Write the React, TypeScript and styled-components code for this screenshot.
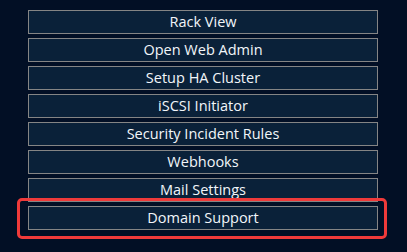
import styled, { createGlobalStyle } from "styled-components"

const Global = createGlobalStyle`
body {
    margin: 0;
    background: #020f25;
}
`

const Page = styled.div`
width: 407px;
height: 252px;
background: #020f25;
padding: 10px 0 0 28px;
box-sizing: border-box;
display: flex;
flex-direction: column;
gap: 4px;
`

const Slot = styled.div`
position: relative;
width: 350px;
`

const Button = styled.button`
width: 350px;
height: 24px;
box-sizing: border-box;
border: 1px solid #858585;
background: #0a2139;
color: #f2f6fa;
font-family: "Open Sans", "Noto Sans", sans-serif;
font-size: 14.5px;
line-height: 20px;
padding: 0;
display: flex;
align-items: center;
justify-content: center;
cursor: pointer;
`

const Highlight = styled.div`
position: absolute;
left: -11px;
right: -9px;
top: -8px;
bottom: -9px;
border: 3.5px solid #ef3a3a;
border-radius: 5px;
pointer-events: none;
`

const items = [
    "Rack View",
    "Open Web Admin",
    "Setup HA Cluster",
    "iSCSI Initiator",
    "Security Incident Rules",
    "Webhooks",
    "Mail Settings",
    "Domain Support",
]

const App = () => {
    return(
        <>
            <Global/>
            <Page>
                {items.map((label, i) => (
                    <Slot key={label}>
                        <Button>{label}</Button>
                        {i === items.length - 1 && <Highlight/>}
                    </Slot>
                ))}
            </Page>
        </>
    )
}

export default App
